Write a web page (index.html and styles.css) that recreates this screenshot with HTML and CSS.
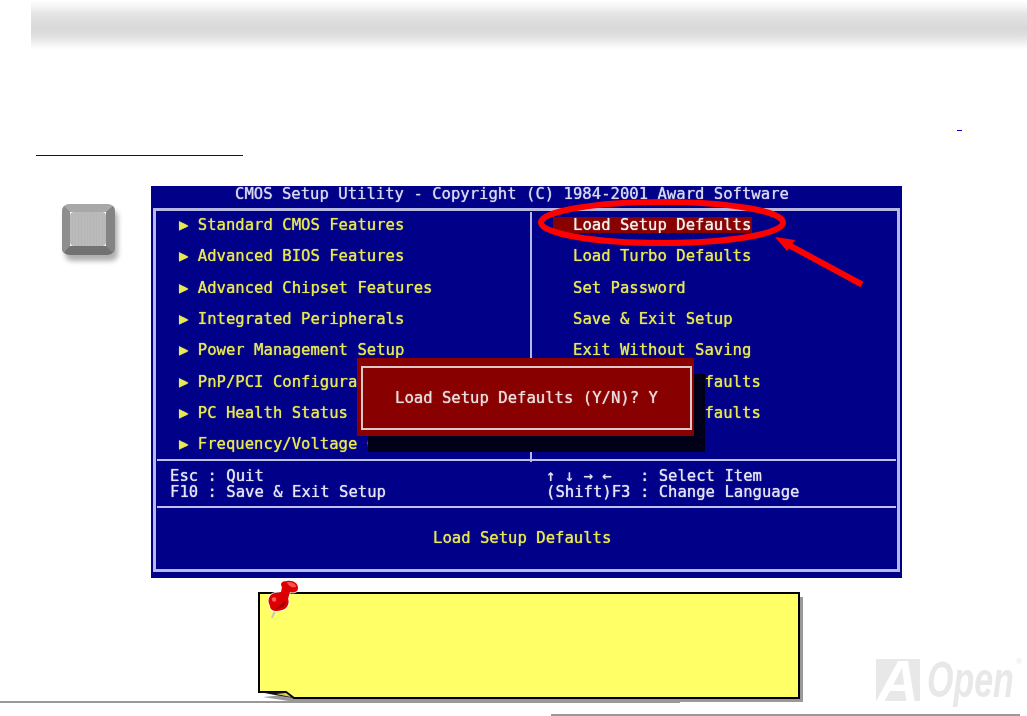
FILE: index.html
```html
<!DOCTYPE html>
<html lang="en">
<head>
<meta charset="utf-8">
<title>Load Setup Defaults</title>
<link rel="stylesheet" href="styles.css">
</head>
<body>
<header class="banner"></header>
<section class="intro">
  <div class="intro-row intro-row-end"><a class="stub stub-short" href="#"></a></div>
  <div class="intro-row"><a class="stub stub-long" href="#"></a></div>
</section>
<main class="stage">
  <div class="keycap"><div class="keycap-top"></div></div>
  <div class="screen">
    <div class="bios">
      <div class="bios-title">CMOS Setup Utility - Copyright (C) 1984-2001 Award Software</div>
      <div class="frame">
        <div class="menu">
          <ul class="menu-col menu-left">
            <li class="item">▶ Standard CMOS Features</li>
            <li class="item">▶ Advanced BIOS Features</li>
            <li class="item">▶ Advanced Chipset Features</li>
            <li class="item">▶ Integrated Peripherals</li>
            <li class="item">▶ Power Management Setup</li>
            <li class="item">▶ PnP/PCI Configurations</li>
            <li class="item">▶ PC Health Status</li>
            <li class="item">▶ Frequency/Voltage Control</li>
          </ul>
          <ul class="menu-col menu-right">
            <li class="item"><span class="active">Load Setup Defaults</span></li>
            <li class="item">Load Turbo Defaults</li>
            <li class="item">Set Password</li>
            <li class="item">Save &amp; Exit Setup</li>
            <li class="item">Exit Without Saving</li>
            <li class="item">Load EEPROM Defaults</li>
            <li class="item">Save EEPROM Defaults</li>
          </ul>
        </div>
        <div class="hints">
          <div class="hint-col hint-left">Esc : Quit
F10 : Save &amp; Exit Setup</div>
          <div class="hint-col hint-right">↑ ↓ → ←   : Select Item
(Shift)F3 : Change Language</div>
        </div>
        <div class="help">Load Setup Defaults</div>
      </div>
      <div class="dialog"><div class="dialog-inner">Load Setup Defaults (Y/N)? Y</div></div>
    </div>
    <svg class="markup" viewBox="0 0 751 392" aria-hidden="true">
      <ellipse cx="511" cy="36.5" rx="121" ry="20.5" fill="none" stroke="#ff0000" stroke-width="6"/>
      <path d="M711 98.500 634 57" fill="none" stroke="#ff0000" stroke-width="6"/>
      <path d="M624 51 644 54 636 65Z" fill="#ff0000"/>
    </svg>
  </div>
</main>
<section class="lower">
  <svg class="note" width="552" height="125" viewBox="0 0 552 125" aria-hidden="true">
    <path d="M8 119 40 124 548 124 548 19 540 19 540 116 40 116Z" fill="#999999"/>
    <path d="M4 15H544V120H39L31 114H4Z" fill="#ffff66" stroke="#000000" stroke-width="2"/>
    <path d="M4 114H31L39 120 20 117Z" fill="#111111"/>
    <path d="M21 116 31 115 36 119Z" fill="#d8d060"/>
    <g class="pin">
      <path d="M22 28 17 40" stroke="#c8c8c8" stroke-width="2" fill="none"/>
      <path d="M15 18C18 14 23 15 26 14L27 9C25 6 26 3 32 3 38 2 43 5 43 10 43 14 39 15 35 14L33 21C35 25 32 31 27 32 21 34 15 33 15 28 13 24 13 21 15 18Z" fill="#dd0000" stroke="#ffffff" stroke-width="2" stroke-opacity=".8" paint-order="stroke"/>
      <path d="M32 4C38 4 41 6 41 9 37 10 33 8 32 4Z" fill="#ff5050"/>
      <path d="M17 20C20 18 22 20 21 23 19 25 16 23 17 20Z" fill="#ff5a5a"/>
      <path d="M31 22C32 27 27 31 20 31 25 28 28 25 31 22Z" fill="#a00000"/>
    </g>
  </svg>
  <div class="logo">
    <span class="logo-a">A</span><span class="logo-open">Open</span><span class="logo-reg">®</span>
  </div>
</section>
<div class="rule rule-left"></div>
<div class="rule rule-right"></div>
</body>
</html>
```
FILE: styles.css
```css
* { box-sizing: border-box; }

html, body {
  margin: 0;
  padding: 0;
  height: 716px;
  overflow: hidden;
  background: #ffffff;
}

.banner {
  height: 50px;
  margin-left: 31px;
  background: linear-gradient(to bottom, #ffffff 0, #f8f8f8 5px, #e4e4e4 14px, #d8d8d8 28px, #e0e0e0 36px, #f8f8f8 46px, #ffffff 50px);
}

.intro {
  height: 136px;
  padding-top: 80px;
}

.intro-row { display: flex; height: 25px; }
.intro-row-end { justify-content: flex-end; padding-right: 65px; }

.stub { display: block; height: 1px; background: #0000cc; }
.stub-short { width: 5px; }
.stub-long { width: 207px; margin-left: 36px; }

.stage {
  display: flex;
  height: 392px;
  align-items: flex-start;
}

.keycap {
  width: 53px;
  height: 51px;
  margin: 18px 36px 0 62px;
  border-style: solid;
  border-width: 8px 9px 9px 8px;
  border-color: #a8a8a8 #848484 #727272 #8e8e8e;
  border-radius: 7px;
  box-shadow: 3px 6px 5px #b0b0b0;
  filter: blur(0.5px);
}

.keycap-top {
  height: 100%;
  border-radius: 4px;
  background: repeating-linear-gradient(to right, #bababa 0, #bababa 2px, #b6b6b6 2px, #b6b6b6 3px);
}

.screen { position: relative; width: 751px; height: 392px; }

.markup { position: absolute; inset: 0; width: 751px; height: 392px; }

.bios {
  position: relative;
  height: 392px;
  padding: 0 2px;
  background: #000088;
  color: #e8e850;
  font-family: "DejaVu Sans Mono", monospace;
  font-size: 15.6px;
  text-shadow: 0 0 1px currentColor;
  filter: blur(0.4px);
}

.bios-title {
  height: 22px;
  line-height: 17px;
  padding-left: 82px;
  color: #d8d8f0;
}

.frame {
  height: 364px;
  padding: 1px;
  border: 3px solid #b8b8e4;
}

.menu {
  display: grid;
  grid-template-columns: 373px 1fr;
  height: 249px;
  border-bottom: 2px solid #c0c0e8;
}

.menu-col {
  list-style: none;
  margin: 0;
  padding: 0;
}

.menu-left { padding-left: 22px; }

.menu-right {
  padding-left: 41px;
  border-left: 2px solid #b8b8e4;
}

.item {
  display: flex;
  align-items: center;
  height: 31.3px;
  white-space: pre;
  position: relative;
  top: -2.6px;
}

.active {
  margin-left: -20px;
  padding: 0 1px 0 20px;
  line-height: 16px;
  background: #880000;
  color: #f0f0f0;
}

.hints {
  display: grid;
  grid-template-columns: 375px 1fr;
  height: 47px;
  padding-top: 8px;
  border-bottom: 2px solid #c0c0e8;
  color: #e4e4f4;
  line-height: 15.6px;
  white-space: pre;
}

.hint-left { padding-left: 13px; }
.hint-right { padding-left: 14px; }

.help {
  height: 60px;
  line-height: 61px;
  padding-left: 276px;
}

.dialog {
  position: absolute;
  left: 206px;
  top: 172px;
  width: 337px;
  height: 78px;
  padding: 8px 2px 6px 4px;
  background: #880000;
  box-shadow: 11px 16px 0 #000018;
}

.dialog-inner {
  height: 100%;
  padding-left: 32px;
  line-height: 60px;
  border: 2px solid #dcc8c8;
  color: #ecdcdc;
}

.lower {
  display: flex;
  height: 123px;
  padding-left: 255px;
}

.note { flex: none; display: block; }

.logo {
  position: relative;
  flex: none;
  width: 140px;
  height: 46px;
  margin: 81px 0 0 69px;
  display: flex;
  font-family: "Liberation Sans", sans-serif;
  font-weight: 700;
  font-style: italic;
  color: #e8e8e8;
}

.logo-a {
  flex: none;
  width: 44px;
  height: 42px;
  background: #e8e8e8;
  color: #ffffff;
  font-size: 57px;
  line-height: 44px;
  text-align: center;
}

.logo-open {
  flex: none;
  width: 90px;
  margin-left: 7px;
  font-size: 50px;
  line-height: 42px;
  transform: scaleX(0.68);
  transform-origin: left center;
}

.logo-reg {
  position: absolute;
  right: -6px;
  top: -2px;
  font-size: 8px;
  font-style: normal;
  font-weight: 400;
}

.rule { height: 2px; background: #999999; }
.rule-left { width: 680px; }
.rule-right { width: 469px; margin: 11px 0 0 551px; }
```
